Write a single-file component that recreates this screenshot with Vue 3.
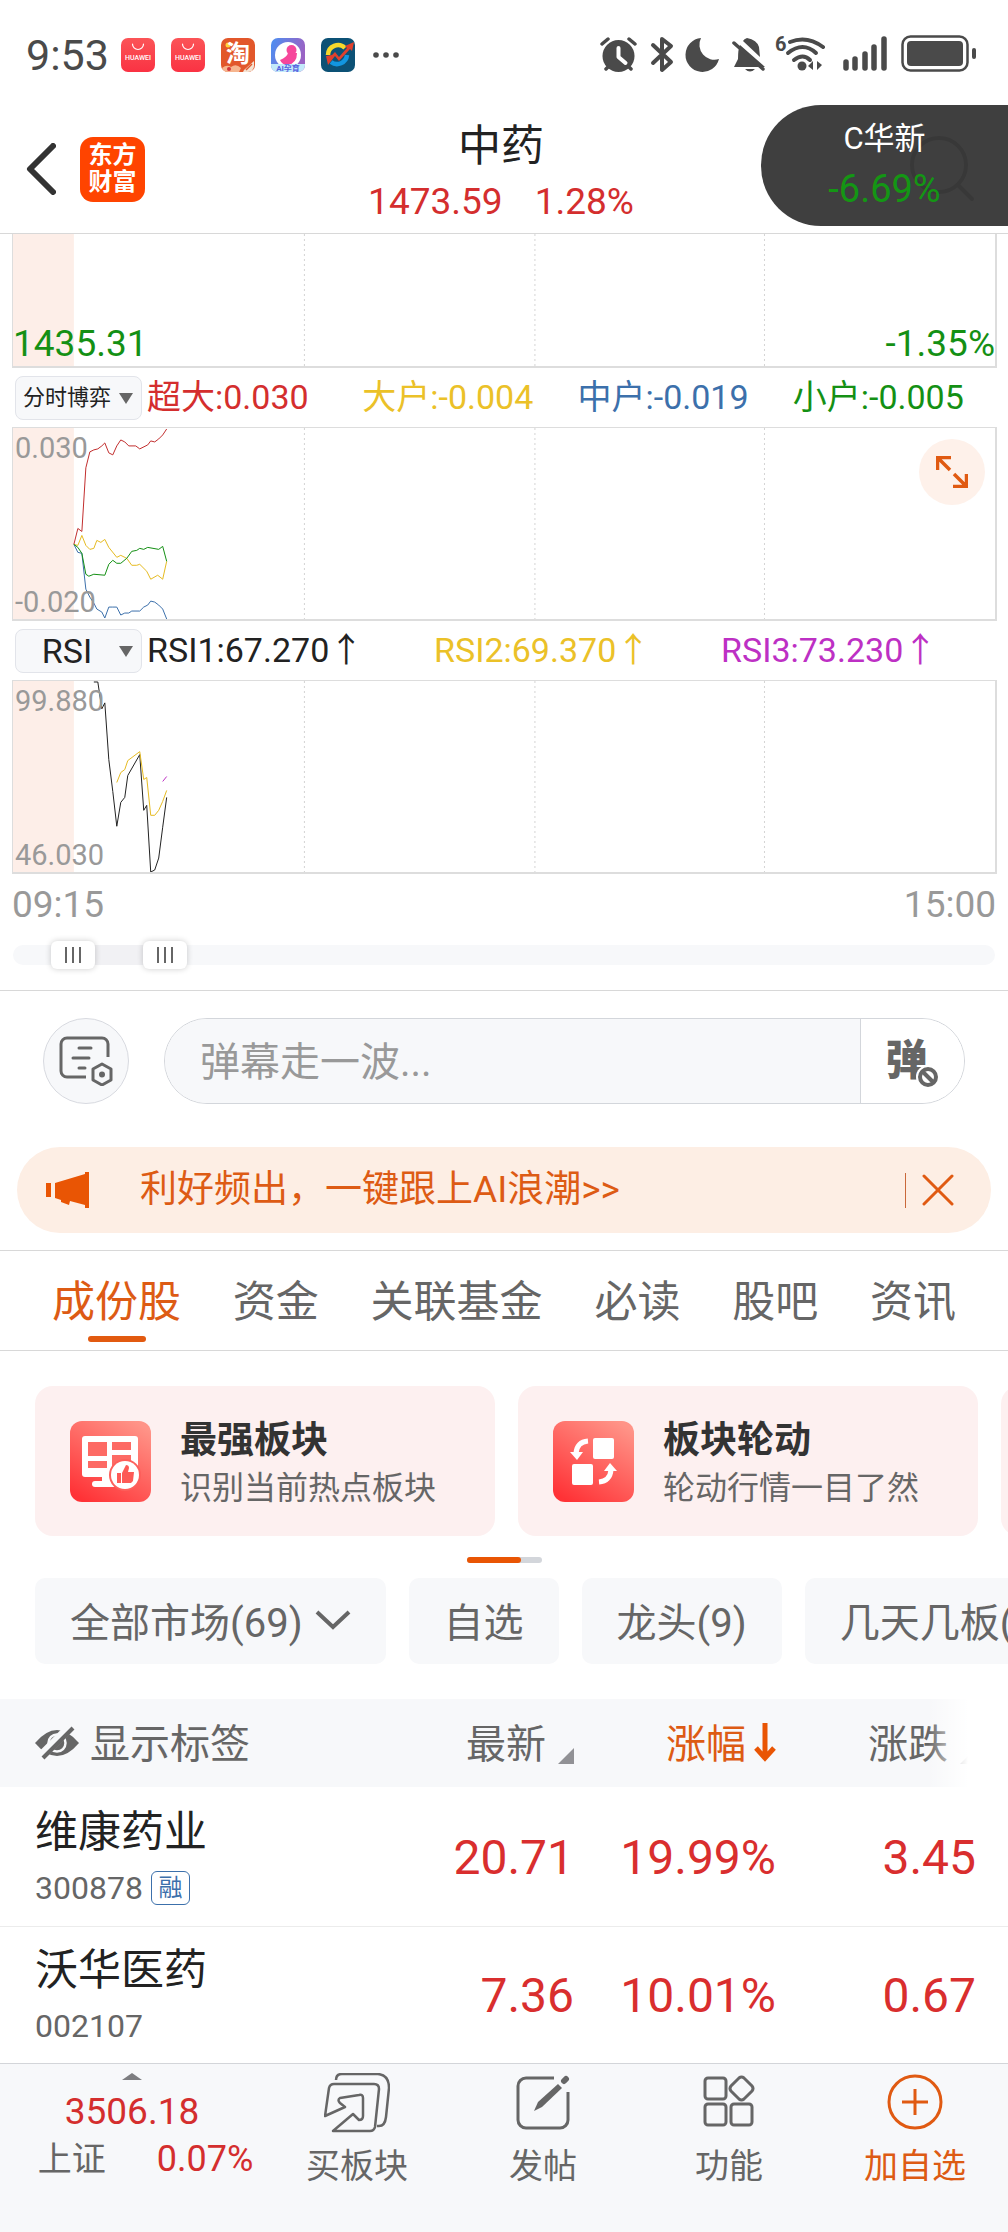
<script setup>
import { ref } from 'vue'

const grid = [292, 523, 753]

const flowLegend = [
  { text: '超大:0.030', tone: 'red' },
  { text: '大户:-0.004', tone: 'yellow' },
  { text: '中户:-0.019', tone: 'blue' },
  { text: '小户:-0.005', tone: 'green' },
]
const rsiLegend = [
  { text: 'RSI1:67.270↑', tone: 'dark' },
  { text: 'RSI2:69.370↑', tone: 'yellow' },
  { text: 'RSI3:73.230↑', tone: 'purple' },
]

const flowLines = [
  { tone: 'red', points: '61,117 65,101 69,104 73,40 77,24 81,22 85,21 89,18 92,15 96,25 100,27 104,18 108,12 112,14 116,18 123,18 127,21 135,17 138,13 142,14 146,11 150,7 154,1' },
  { tone: 'blue', points: '61,117 65,125 69,126 73,162 77,170 81,176 84,182 89,185 92,191 96,180 100,180 104,180 108,188 112,186 116,186 119,184 127,184 131,180 135,178 138,174 142,175 146,178 150,182 154,192' },
  { tone: 'yellow', points: '61,117 65,118 69,108 73,118 77,122 81,121 84,113 88,115 92,112 96,120 104,130 108,128 114,131 119,138 124,138 127,137 134,144 138,152 145,148 150,152 154,134' },
  { tone: 'green', points: '61,117 65,120 69,126 73,147 76,149 81,147 92,148 96,137 100,133 104,136 108,136 114,131 119,124 124,123 127,121 131,122 135,120 146,122 150,119 154,134' },
]
const rsiLines = [
  { tone: 'dark', points: '81,1 85,1 89,28 92,22 96,79 100,111 104,146 108,122 112,117 115,95 127,74 131,130 134,125 138,192 142,190 146,178 150,147 154,117' },
  { tone: 'yellow', points: '104,102 108,92 112,89 115,80 127,71 131,99 134,97 138,135 142,135 146,130 150,121 154,110' },
  { tone: 'purple', points: '150,101 154,96' },
]

const rangeStart = ref(41)
const rangeEnd = ref(139)
const message = ref('')

const tabs = ['成份股', '资金', '关联基金', '必读', '股吧', '资讯']
const activeTab = ref('成份股')

const chips = ['自选', '龙头(9)', '几天几板(9)']

const stocks = [
  { name: '维康药业', code: '300878', tag: '融', price: '20.71', pct: '19.99%', diff: '3.45' },
  { name: '沃华医药', code: '002107', tag: '', price: '7.36', pct: '10.01%', diff: '0.67' },
]
</script>

<template>
  <div class="page">
    <div class="status">
      <span class="clock">9:53</span>
      <div class="apps">
        <svg v-for="n in 2" :key="n" width="34" height="34" viewBox="0 0 34 34">
          <defs><linearGradient id="hw" x1="0" y1="0" x2="0" y2="1"><stop offset="0" stop-color="#fb5457" /><stop offset="1" stop-color="#fa3243" /></linearGradient></defs>
          <rect width="34" height="34" rx="7" fill="url(#hw)" />
          <path d="M11.500 6a5.500 5.500 0 0 0 11 0" fill="none" stroke="#fff" stroke-width="1.200" stroke-linecap="round" />
          <text x="17" y="22" text-anchor="middle" font-size="7" font-weight="500" fill="#fff">HUAWEI</text>
        </svg>
        <svg width="34" height="34" viewBox="0 0 34 34">
          <rect width="34" height="34" rx="7" fill="#e2572b" />
          <circle cx="7" cy="7" r="2.500" fill="#ffd23c" />
          <text x="17" y="24" text-anchor="middle" font-size="24" font-weight="700" fill="#fff">淘</text>
          <path d="M1 30q5-4 9-1q5-4 10 1l-2 4H7a7 7 0 0 1-6-4z" fill="#f6b58e" />
          <circle cx="8" cy="31" r="2" fill="#d3333a" />
          <path d="M23 32l10-9v5a6 6 0 0 1-6 6h-5z" fill="#f3e2d2" />
          <path d="M25 32l6-6" stroke="#e2572b" stroke-width="1.500" />
        </svg>
        <svg width="34" height="34" viewBox="0 0 34 34">
          <defs><linearGradient id="baby" x1="0" y1="0" x2="1" y2="0.300"><stop offset="0" stop-color="#4b8ff2" /><stop offset="1" stop-color="#9a63c4" /></linearGradient></defs>
          <rect width="34" height="34" rx="7" fill="url(#baby)" />
          <circle cx="17" cy="17" r="13" fill="#fff" />
          <circle cx="20.500" cy="12" r="5" fill="#f6479b" />
          <path d="M17 15q-1 4-8 7q2 5 8 5q9-2 9-12z" fill="#f6479b" />
          <path d="M0 26h34v1a7 7 0 0 1-7 7H7a7 7 0 0 1-7-7z" fill="#c3eafa" />
          <text x="17" y="33" text-anchor="middle" font-size="8" font-weight="700" fill="#5561e0">AI孕育</text>
        </svg>
        <svg width="34" height="34" viewBox="0 0 34 34">
          <rect width="34" height="34" rx="7" fill="#0c5175" />
          <path d="M7 17a10 10 0 0 1 17-7" fill="none" stroke="#f6d92c" stroke-width="4.500" />
          <path d="M10 24a10 10 0 0 0 16-7" fill="none" stroke="#1296e0" stroke-width="4.500" />
          <path d="M5 18l6-1 3-3 4 5 8-9-2-2 9-4-2 9-2-2-11 12-4-5-7 9z" fill="#e0402c" />
        </svg>
      </div>
      <svg class="more" width="26" height="6" viewBox="0 0 26 6" fill="#4a4a4a"><circle cx="3" cy="3" r="2.800" /><circle cx="13" cy="3" r="2.800" /><circle cx="23" cy="3" r="2.800" /></svg>
      <svg class="system" width="378" height="40" viewBox="0 0 378 40" fill="#4a4a4a" stroke-linecap="round" stroke-linejoin="round">
        <g>
          <circle cx="18.500" cy="21" r="16" />
          <path d="M2 9l6-5M35 9l-6-5M6 34l3-3M31 34l-3-3" stroke="#4a4a4a" stroke-width="3.500" />
          <path d="M18.500 13v9l7 6" fill="none" stroke="#fff" stroke-width="4" />
        </g>
        <path d="M53 10l18 17-9 8V4l9 7-18 17" fill="none" stroke="#4a4a4a" stroke-width="4" />
        <path d="M101 3a15 15 0 0 0 18 21A17 17 0 1 1 101 3z" />
        <g>
          <path d="M140 10q-2 4-2 14l-4 8h31zM143 6q1-2 4-3q10 2 12 9l1 10zM145 34h10q-5 5-10 0z" />
          <path d="M134 8l29 26" stroke="#4a4a4a" stroke-width="3.500" />
          <path d="M139 6l27 24" stroke="#fff" stroke-width="2" />
        </g>
        <text x="175" y="16" font-size="20" font-weight="700">6</text>
        <g fill="none" stroke="#4a4a4a" stroke-width="4">
          <path d="M190 7q17-7 33 5" />
          <path d="M188 18q15-12 28 0" />
          <path d="M194 25q9-7 16 0" />
        </g>
        <circle cx="202" cy="31" r="4.500" />
        <path d="M208 31l5-5v9zM222 30l-5-4v9z" />
        <path d="M246 27v6M255 24v9M265 19v14M274 12v21M284 4v29" stroke="#4a4a4a" stroke-width="5.500" />
        <rect x="302.500" y="1.500" width="65" height="34" rx="8" fill="none" stroke="#4a4a4a" stroke-width="2.500" />
        <rect x="307" y="6" width="56" height="25" rx="4" />
        <rect x="372" y="13" width="4" height="11" rx="2" />
      </svg>
    </div>

    <header class="header">
      <div class="header-left">
        <button class="plain" aria-label="返回">
          <svg width="30" height="52" viewBox="0 0 30 52"><path d="M27 3L4 26l23 23" fill="none" stroke="#333" stroke-width="6" stroke-linecap="round" stroke-linejoin="round" /></svg>
        </button>
        <a class="logo" href="#"><span>东方</span><span>财富</span></a>
      </div>
      <div class="header-title">
        <h1>中药</h1>
        <p><span>1473.59</span><span>1.28%</span></p>
      </div>
      <div class="header-right">
        <button class="plain search" aria-label="搜索">
          <svg width="66" height="66" viewBox="0 0 66 66" fill="none" stroke="#888" stroke-width="4" stroke-linecap="round"><circle cx="29" cy="29" r="27" /><path d="M49 50l13 13" /></svg>
        </button>
      </div>
      <div class="float">
        <span class="float-name">C华新</span>
        <span class="float-pct">-6.69%</span>
      </div>
    </header>

    <section class="charts">
      <div class="chart price">
        <svg viewBox="0 0 984 192" preserveAspectRatio="none">
          <rect width="61" height="192" class="shade" />
          <line v-for="x in grid" :key="x" :x1="x" :x2="x" y1="0" y2="192" class="gridline" />
        </svg>
        <span class="price-low">1435.31</span>
        <span class="pct-low">-1.35%</span>
      </div>

      <div class="legend">
        <label class="picker small">
          <select aria-label="指标一"><option>分时博弈</option></select>
          <i></i>
        </label>
        <div class="legend-items">
          <span v-for="l in flowLegend" :key="l.text" :class="l.tone">{{ l.text }}</span>
        </div>
      </div>

      <div class="chart">
        <svg viewBox="0 0 984 192" preserveAspectRatio="none">
          <rect width="61" height="192" class="shade" />
          <line v-for="x in grid" :key="x" :x1="x" :x2="x" y1="0" y2="192" class="gridline" />
          <polyline v-for="l in flowLines" :key="l.tone" :points="l.points" :class="['line', l.tone]" />
        </svg>
        <span class="axis axis-high">0.030</span>
        <span class="axis axis-low">-0.020</span>
        <button class="expand" aria-label="全屏">
          <svg width="32" height="32" viewBox="0 0 32 32" fill="none" stroke="#e05a12" stroke-width="3.500"><path d="M1.500 14V1.500H15M2 2l12 12M30.500 18v12.500H17M30 30L18 18" /></svg>
        </button>
      </div>

      <div class="legend">
        <label class="picker">
          <select aria-label="指标二"><option>RSI</option></select>
          <i></i>
        </label>
        <div class="legend-items">
          <span v-for="l in rsiLegend" :key="l.text" :class="l.tone">{{ l.text }}</span>
        </div>
      </div>

      <div class="chart">
        <svg viewBox="0 0 984 192" preserveAspectRatio="none">
          <rect width="61" height="192" class="shade" />
          <line v-for="x in grid" :key="x" :x1="x" :x2="x" y1="0" y2="192" class="gridline" />
          <polyline v-for="l in rsiLines" :key="l.tone" :points="l.points" :class="['line', l.tone]" />
        </svg>
        <span class="axis axis-high">99.880</span>
        <span class="axis axis-low">46.030</span>
      </div>

      <div class="times"><span>09:15</span><span>15:00</span></div>

      <div class="range">
        <div class="range-fill" :style="{ left: rangeStart / 10 + '%', width: (rangeEnd - rangeStart) / 10 + '%' }"></div>
        <input v-model.number="rangeStart" type="range" min="0" max="1000" aria-label="开始时间" />
        <input v-model.number="rangeEnd" type="range" min="0" max="1000" aria-label="结束时间" />
      </div>
    </section>

    <form class="danmu" @submit.prevent>
      <button type="button" class="danmu-set" aria-label="弹幕设置">
        <svg width="54" height="50" viewBox="0 0 54 50" fill="none" stroke="#666" stroke-width="3" stroke-linecap="round">
          <path d="M49 21V8a6 6 0 0 0-6-6H8a6 6 0 0 0-6 6v27a6 6 0 0 0 6 6h19" stroke-linecap="butt" />
          <path d="M20 12h12M14 22h16M20 32h6" />
          <path d="M43 28l9 5v11l-9 5-9-5V33z" stroke-linejoin="round" />
          <circle cx="43" cy="38.500" r="3" fill="#666" stroke="none" />
        </svg>
      </button>
      <div class="danmu-box">
        <input v-model="message" type="text" placeholder="弹幕走一波..." aria-label="弹幕" />
        <button type="button" aria-label="关闭弹幕">
          <span class="danmu-char">弹</span>
          <svg width="24" height="24" viewBox="0 0 24 24"><circle cx="12" cy="12" r="12" fill="#fff" /><circle cx="12" cy="12" r="8" fill="none" stroke="#666" stroke-width="4" /><path d="M7 7l10 10" stroke="#666" stroke-width="4" /></svg>
        </button>
      </div>
    </form>

    <div class="notice">
      <svg width="44" height="38" viewBox="0 0 44 38" fill="#e95504"><path d="M0 12h5v14H0zM9 12L39 3V1h4v36h-4v-3l-15-4-1 4-8-3v-2l-6-2z" /></svg>
      <a href="#">利好频出，一键跟上AI浪潮&gt;&gt;</a>
      <span class="notice-rule"></span>
      <button class="plain" aria-label="关闭">
        <svg width="32" height="32" viewBox="0 0 32 32"><path d="M2 2l28 28M30 2L2 30" stroke="#e05a12" stroke-width="3" stroke-linecap="round" /></svg>
      </button>
    </div>

    <nav class="tabs">
      <button v-for="t in tabs" :key="t" :class="{ active: t === activeTab }" @click="activeTab = t">{{ t }}</button>
    </nav>

    <div class="cards">
      <a class="card" href="#">
        <svg width="81" height="81" viewBox="0 0 81 81">
          <defs><linearGradient id="tile" x1="0.200" y1="1" x2="0.800" y2="0"><stop offset="0" stop-color="#ff3236" /><stop offset="1" stop-color="#ff9488" /></linearGradient></defs>
          <rect width="81" height="81" rx="12" fill="url(#tile)" />
          <rect x="12" y="15" width="56" height="41" rx="3" fill="#fff" />
          <path d="M18 21h19v14H18zM42 21h19v8H42zM18 40h19v7H18zM42 34h19v14H42z" fill="#fd6a64" />
          <rect x="22" y="60" width="34" height="6" rx="3" fill="#fff" />
          <path d="M32 54h12v8H32z" fill="#fff" />
          <circle cx="55" cy="54" r="16" fill="#fd5f5b" /><circle cx="55" cy="54" r="14" fill="#fff" />
          <path d="M47 52h4v10h-4zM52 52l4-8q3 0 3 3l-1 4h6l-1 9-2 2h-9z" fill="#fd5a56" />
        </svg>
        <div><strong>最强板块</strong><span>识别当前热点板块</span></div>
      </a>
      <a class="card" href="#">
        <svg width="81" height="81" viewBox="0 0 81 81">
          <rect width="81" height="81" rx="12" fill="url(#tile)" />
          <rect x="40" y="17" width="21" height="21" rx="2" fill="#fff" /><rect x="19" y="43" width="21" height="21" rx="2" fill="#fff" />
          <path d="M35 20q-11 1-12 12M46 61q11-1 12-12" fill="none" stroke="#fff" stroke-width="5" />
          <path d="M17 31h13l-6 8zM51 50l6-8 7 8z" fill="#fff" />
        </svg>
        <div><strong>板块轮动</strong><span>轮动行情一目了然</span></div>
      </a>
      <a class="card" href="#" aria-label="更多板块"></a>
    </div>
    <div class="pager"><span></span></div>

    <div class="chips">
      <button>全部市场(69)<svg width="36" height="22" viewBox="0 0 36 22"><path d="M2 3l16 15L34 3" fill="none" stroke="#666" stroke-width="4" /></svg></button>
      <button v-for="c in chips" :key="c">{{ c }}</button>
    </div>

    <table class="stocks">
      <colgroup><col /><col class="c1" /><col class="c2" /><col class="c3" /></colgroup>
      <thead>
        <tr>
          <th>
            <button class="plain sort">
              <svg width="44" height="36" viewBox="0 0 44 36"><path d="M0 18Q22-8 44 18Q22 44 0 18z" fill="#666" /><circle cx="22" cy="18" r="8.500" fill="none" stroke="#f7f8fa" stroke-width="2.500" /><path d="M5 32L37 0" stroke="#f7f8fa" stroke-width="9" /><path d="M8 33L38 3" stroke="#666" stroke-width="4" /></svg>
              <span>显示标签</span>
            </button>
          </th>
          <th><button class="plain sort"><span>最新</span><i></i></button></th>
          <th>
            <button class="plain sort hot"><span>涨幅</span><svg width="22" height="40" viewBox="0 0 22 40" fill="none" stroke="#e95504" stroke-width="5"><path d="M11 0v34M2 25l9 10 9-10" /></svg></button>
          </th>
          <th><button class="plain sort"><span>涨跌</span><i></i></button></th>
        </tr>
      </thead>
      <tbody>
        <tr v-for="s in stocks" :key="s.code">
          <td>
            <div class="name">{{ s.name }}</div>
            <div class="code"><span>{{ s.code }}</span><em v-if="s.tag">{{ s.tag }}</em></div>
          </td>
          <td>{{ s.price }}</td>
          <td>{{ s.pct }}</td>
          <td>{{ s.diff }}</td>
        </tr>
      </tbody>
    </table>

    <footer class="dock">
      <button class="index">
        <i></i>
        <b>3506.18</b>
        <span><small>上证</small><small class="up">0.07%</small></span>
      </button>
      <button>
        <svg width="66" height="60" viewBox="0 0 66 60" fill="none" stroke="#666" stroke-width="2.500" stroke-linejoin="round">
          <path d="M12 7q0-6 6-6h36q11 1 11 14l-3 29q-1 9-7 9h-2" />
          <path d="M1 43L5 15q1-4 5-4h40q5 0 5 5l-4 38q-1 4-5 4H9L29 41l6 6q4 0 4-4V25q0-4-4-3l-19 3q-3 2 0 5l5 4z" />
        </svg>
        <span>买板块</span>
      </button>
      <button>
        <svg width="54" height="60" viewBox="0 0 54 60" fill="none" stroke="#666" stroke-width="3">
          <path d="M38 5H10a8 8 0 0 0-8 8v34a8 8 0 0 0 8 8h34a8 8 0 0 0 8-8V19" />
          <path d="M18 38l4-9 20-18 4 4-20 19z" fill="#666" stroke="none" />
          <path d="M48 8l2-2" stroke-width="6" stroke-linecap="round" />
        </svg>
        <span>发帖</span>
      </button>
      <button>
        <svg width="52" height="60" viewBox="0 0 52 60" fill="none" stroke="#666" stroke-width="3">
          <rect x="2" y="5" width="21" height="21" rx="3" /><rect x="2" y="31" width="21" height="21" rx="3" /><rect x="28" y="31" width="21" height="21" rx="3" />
          <path d="M36 5q2.500-2 5 0l8 8q2 2.500 0 5l-8 8q-2.500 2-5 0l-8-8q-2-2.500 0-5z" />
        </svg>
        <span>功能</span>
      </button>
      <button class="add">
        <svg width="56" height="60" viewBox="0 0 56 60" fill="none" stroke="#e05a12" stroke-width="3"><circle cx="28" cy="29" r="26" /><path d="M15 29h26M28 16v26" /></svg>
        <span>加自选</span>
      </button>
    </footer>
  </div>
</template>

<style>
body {
  margin: 0;
  background: #fff;
}
</style>

<style scoped>
.page {
  min-height: 100vh;
  display: flex;
  flex-direction: column;
  overflow: hidden;
  background: #fff;
  color: #666;
  font-family: Roboto, "Noto Sans CJK SC", sans-serif;
}
* {
  box-sizing: border-box;
}
svg {
  display: block;
  flex: none;
}
button,
input,
select {
  font-family: inherit;
  color: inherit;
  margin: 0;
}
button {
  border: 0;
  background: none;
  padding: 0;
}
a {
  color: inherit;
  text-decoration: none;
}

.status {
  display: flex;
  align-items: center;
  height: 105px;
  padding: 4px 30px 0 26px;
}
.clock {
  width: 95px;
  font-size: 43px;
  line-height: 48px;
  color: #4a4a4a;
}
.apps {
  display: flex;
  gap: 16px;
}
.more {
  margin-left: 18px;
}
.system {
  margin-left: auto;
}

.header {
  position: relative;
  display: flex;
  align-items: center;
  height: 129px;
  border-bottom: 1px solid #d8d8d8;
}
.header-left,
.header-right {
  flex: 1;
  display: flex;
  align-items: center;
}
.header-left {
  gap: 24px;
  padding-left: 26px;
}
.header-right {
  justify-content: flex-end;
  padding-right: 32px;
}
.logo {
  display: flex;
  flex-direction: column;
  align-items: center;
  justify-content: center;
  width: 65px;
  height: 65px;
  border-radius: 13px;
  background: #ff4400;
  color: #fff;
  font-size: 24px;
  font-weight: 700;
  line-height: 27px;
}
.header-title {
  padding-top: 6px;
  text-align: center;
}
.header-title h1 {
  margin: 0;
  font-size: 43px;
  line-height: 60px;
  font-weight: 400;
  color: #222;
}
.header-title p {
  display: flex;
  gap: 32px;
  margin: 0;
  font-size: 37px;
  line-height: 52px;
  color: #d42e2e;
}
.float {
  position: absolute;
  right: 0;
  top: 0;
  width: 247px;
  height: 121px;
  padding-top: 9px;
  border-radius: 60px 0 0 60px;
  background: rgba(51, 51, 51, 0.94);
  display: flex;
  flex-direction: column;
  align-items: center;
}
.float-name {
  font-size: 31px;
  line-height: 50px;
  color: #fff;
}
.float-pct {
  font-size: 38px;
  line-height: 50px;
  color: #149614;
}

.charts {
  border-bottom: 1px solid #d8d8d8;
  padding-bottom: 21px;
}
.chart {
  position: relative;
  height: 194px;
  margin: 0 11px 0 12px;
  border: 1px solid #ddd;
  border-right-width: 2px;
  border-bottom-width: 2px;
}
.chart.price {
  height: 134px;
  border-top: 0;
}
.chart > svg {
  width: 100%;
  height: 100%;
}
.shade {
  fill: #fdeee8;
}
.gridline {
  stroke: #d4d4d4;
  stroke-dasharray: 2 3;
  vector-effect: non-scaling-stroke;
}
.line {
  fill: none;
  stroke-width: 1;
  vector-effect: non-scaling-stroke;
}
.line.red { stroke: #c22e2e; }
.line.yellow { stroke: #e6bb22; }
.line.green { stroke: #149014; }
.line.blue { stroke: #3c70ab; }
.line.dark { stroke: #222; }
.line.purple { stroke: #bd30c4; }
.price-low,
.pct-low {
  position: absolute;
  bottom: 0;
  font-size: 37px;
  line-height: 44px;
  color: #149014;
}
.price-low {
  left: 0;
}
.pct-low {
  right: 0;
}
.axis {
  position: absolute;
  left: 2px;
  font-size: 29px;
  line-height: 34px;
  color: #999;
}
.axis-high {
  top: 3px;
}
.axis-low {
  bottom: 0;
}
.expand {
  position: absolute;
  top: 11px;
  right: 10px;
  width: 66px;
  height: 66px;
  border-radius: 50%;
  background: #fef1ea;
  display: flex;
  align-items: center;
  justify-content: center;
}
.legend {
  display: flex;
  align-items: center;
  height: 59px;
  padding-left: 15px;
  gap: 5px;
}
.picker {
  position: relative;
  flex: none;
  width: 127px;
  height: 44px;
}
.picker select {
  appearance: none;
  width: 100%;
  height: 100%;
  padding: 0 23px 0 0;
  border: 1px solid #e2e4ea;
  border-radius: 8px;
  background: #f7f8fa;
  color: #222;
  font-size: 34px;
  text-align-last: center;
}
.picker.small select {
  font-size: 22px;
}
.picker i {
  position: absolute;
  right: 9px;
  top: 17px;
  border: 7px solid transparent;
  border-top: 11px solid #666;
  border-bottom: 0;
}
.legend-items {
  flex: 1;
  display: flex;
  padding-bottom: 2px;
  font-size: 34px;
  line-height: 48px;
}
.legend-items span {
  flex: 1;
  white-space: nowrap;
}
.legend-items .red { color: #d42e2e; }
.legend-items .yellow { color: #ebc128; }
.legend-items .blue { color: #3c70ab; }
.legend-items .green { color: #149014; }
.legend-items .dark { color: #222; }
.legend-items .purple { color: #bd30c4; }
.times {
  display: flex;
  justify-content: space-between;
  padding: 6px 12px 8px;
  font-size: 37px;
  line-height: 50px;
  color: #999;
}
.range {
  position: relative;
  height: 20px;
  margin: 7px 13px 4px;
  border-radius: 10px;
  background: #f7f8fa;
}
.range-fill {
  position: absolute;
  top: 0;
  height: 20px;
  margin-left: 16px;
  background: #f1f1f4;
}
.range input {
  position: absolute;
  left: 0;
  top: -4px;
  width: 100%;
  height: 28px;
  appearance: none;
  background: none;
  pointer-events: none;
}
.range input::-webkit-slider-thumb {
  appearance: none;
  pointer-events: auto;
  width: 44px;
  height: 28px;
  border-radius: 6px;
  box-shadow: 0 0 6px rgba(0, 0, 0, 0.2);
  background:
    linear-gradient(#666, #666) 14px 6px / 2px 16px no-repeat,
    linear-gradient(#666, #666) 21px 6px / 2px 16px no-repeat,
    linear-gradient(#666, #666) 28px 6px / 2px 16px no-repeat,
    #fff;
}

.danmu {
  display: flex;
  gap: 35px;
  padding: 27px 43px 43px;
}
.danmu-set {
  flex: none;
  width: 86px;
  height: 86px;
  border: 1px solid #d8dae0;
  border-radius: 50%;
  background: #f7f8fa;
  display: flex;
  align-items: center;
  justify-content: center;
}
.danmu-box {
  flex: 1;
  display: flex;
  height: 86px;
  border: 1px solid #d3d6db;
  border-radius: 43px;
  overflow: hidden;
}
.danmu-box input {
  flex: 1;
  min-width: 0;
  border: 0;
  outline: 0;
  padding: 2px 35px 0;
  background: #f7f8fa;
  font-size: 40px;
}
.danmu-box input::placeholder {
  color: #999;
}
.danmu-box button {
  position: relative;
  width: 104px;
  border-left: 1px solid #d3d6db;
  background: #fff;
}
.danmu-char {
  display: block;
  padding-right: 12px;
  font-size: 42px;
  line-height: 78px;
  font-weight: 900;
}
.danmu-box button svg {
  position: absolute;
  right: 24px;
  bottom: 14px;
}

.notice {
  display: flex;
  align-items: center;
  height: 86px;
  margin: 0 17px 17px;
  padding: 0 37px 0 29px;
  border-radius: 43px;
  background: #fdeee4;
  color: #dd5b14;
}
.notice a {
  flex: 1;
  margin-left: 50px;
  font-size: 37px;
  line-height: 52px;
}
.notice-rule {
  width: 1px;
  height: 35px;
  margin-right: 16px;
  background: #c9683a;
}

.tabs {
  display: flex;
  justify-content: space-between;
  height: 101px;
  padding: 0 52px;
  border-top: 1px solid #d8d8d8;
  border-bottom: 1px solid #d8d8d8;
}
.tabs button {
  position: relative;
  padding-top: 2px;
  font-size: 43px;
  line-height: 60px;
}
.tabs .active {
  color: #dd5b14;
}
.tabs .active::after {
  content: "";
  position: absolute;
  left: 50%;
  bottom: 8px;
  width: 58px;
  height: 6px;
  margin-left: -29px;
  border-radius: 3px;
  background: #e25a10;
}

.cards {
  display: flex;
  gap: 23px;
  padding: 35px 0 21px 35px;
}
.card {
  flex: none;
  display: flex;
  align-items: center;
  gap: 29px;
  width: 460px;
  height: 150px;
  padding: 0 35px;
  border-radius: 18px;
  background: #fdf0f0;
}
.card div {
  display: flex;
  flex-direction: column;
  padding-top: 6px;
}
.card strong {
  font-size: 37px;
  line-height: 48px;
  color: #333;
}
.card span {
  font-size: 32px;
  line-height: 46px;
}
.pager {
  align-self: center;
  width: 75px;
  height: 6px;
  border-radius: 3px;
  background: #d3d6db;
}
.pager span {
  display: block;
  width: 54px;
  height: 6px;
  border-radius: 3px;
  background: #e95504;
}

.chips {
  display: flex;
  gap: 23px;
  padding: 15px 0 35px 35px;
}
.chips button {
  flex: none;
  display: flex;
  align-items: center;
  gap: 12px;
  height: 86px;
  padding: 0 35px 2px;
  border-radius: 10px;
  background: #f7f8fa;
  font-size: 40px;
}

.stocks {
  width: 100%;
  border-collapse: collapse;
  table-layout: fixed;
}
.c1 { width: 202px; }
.c2 { width: 202px; }
.c3 { width: 232px; }
.stocks th {
  height: 88px;
  padding: 0;
  background: #f7f8fa;
  font-weight: 400;
}
.stocks th:first-child,
.stocks td:first-child {
  padding-left: 35px;
  text-align: left;
}
.stocks th:last-child,
.stocks td:last-child {
  padding-right: 32px;
}
.stocks th:last-child {
  position: relative;
}
.stocks th:last-child::after {
  content: "";
  position: absolute;
  inset: 0 0 0 auto;
  width: 80px;
  background: linear-gradient(to right, rgba(255, 255, 255, 0), #fff 50%);
}
.sort {
  display: flex;
  align-items: center;
  justify-content: flex-end;
  width: 100%;
  gap: 12px;
  font-size: 40px;
  line-height: 56px;
}
.sort span {
  padding-top: 4px;
}
th:first-child .sort {
  gap: 11px;
  justify-content: flex-start;
}
.sort i {
  margin-top: 26px;
  border: 8px solid #919195;
  border-top-color: transparent;
  border-left-color: transparent;
}
.sort.hot {
  gap: 8px;
  color: #dd5b14;
}
.stocks td {
  height: 139px;
  padding: 3px 0 0;
  border-bottom: 1px solid #ececec;
  text-align: right;
  font-size: 48px;
  line-height: 60px;
  color: #d92e2e;
}
.stocks tr:last-child td {
  height: 137px;
  border-bottom: 0;
}
.name {
  font-size: 43px;
  line-height: 60px;
  color: #222;
}
.code {
  display: flex;
  align-items: center;
  gap: 8px;
  font-size: 32px;
  line-height: 52px;
  color: #666;
}
.code em {
  width: 39px;
  border: 1px solid #3c70ab;
  border-radius: 6px;
  font-size: 24px;
  line-height: 32px;
  font-style: normal;
  text-align: center;
  color: #3c70ab;
}

.dock {
  flex: 1;
  display: grid;
  grid-template-columns: 264fr 186fr 186fr 186fr 186fr;
  align-items: start;
  min-height: 169px;
  padding-top: 9px;
  border-top: 1px solid #d3d5d9;
  background: #f7f8fa;
}
.dock button {
  display: flex;
  flex-direction: column;
  align-items: center;
  font-size: 34px;
  line-height: 48px;
}
.dock button > span {
  margin-top: 9px;
}
.dock .add {
  color: #dd5b14;
}
.dock .index i {
  border: 10px solid transparent;
  border-top: 0;
  border-bottom: 7px solid #7d7d80;
}
.dock .index b {
  margin-top: 9px;
  font-size: 37px;
  line-height: 46px;
  font-weight: 400;
  color: #d42e2e;
}
.dock .index > span {
  display: flex;
  gap: 51px;
  margin: 0 0 0 27px;
}
.dock small {
  font-size: 34px;
}
.dock .up {
  font-size: 36px;
  color: #d42e2e;
}
</style>
